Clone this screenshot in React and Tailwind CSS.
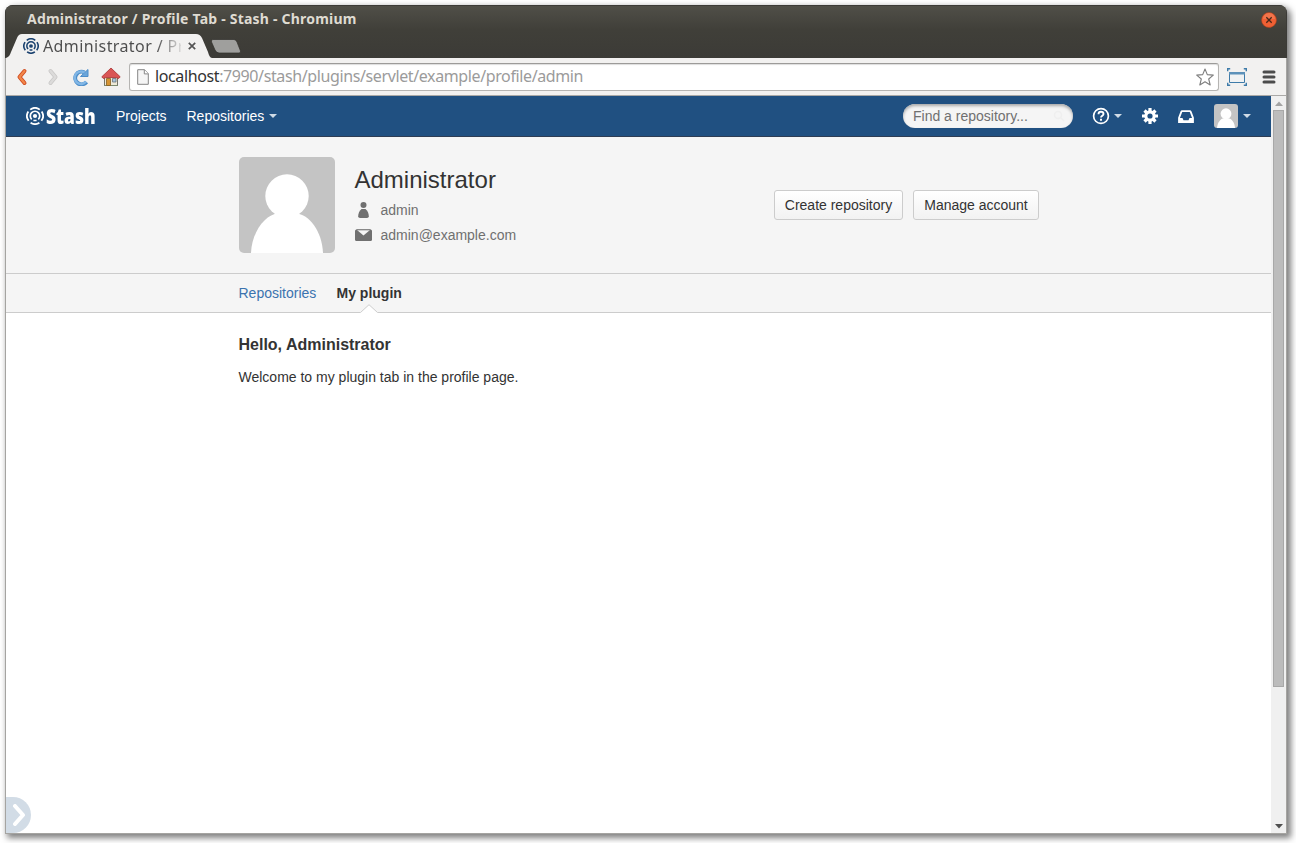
import React from "react";

function StashMark({ className }) {
  return (
    <svg className={className} viewBox="0 0 18 18" fill="none" stroke="currentColor">
      <circle cx="9" cy="9" r="2.1" fill="currentColor" stroke="none" />
      <path d="M5.700 12.300a4.700 4.700 0 1 1 6.600 0" strokeWidth="1.700" />
      <path d="M7.400 13.500h3.200" strokeWidth="1.600" />
      <path d="M2.300 4.600A8 8 0 0 0 2.600 13.800M4.200 2.600a8 8 0 0 1 9.600 0M15.700 4.600a8 8 0 0 1-.3 9.200M4.600 15.700a8 8 0 0 0 8.800 0" strokeWidth="1.800" />
    </svg>
  );
}

function Caret({ className }) {
  return (
    <svg className={className} width="8" height="4" viewBox="0 0 8 4">
      <path d="M0 0h8L4 4z" fill="currentColor" />
    </svg>
  );
}

function Avatar({ className }) {
  return (
    <svg className={className} viewBox="0 0 96 96">
      <rect width="96" height="96" fill="#c4c4c4" />
      <circle cx="48" cy="39" r="21.7" fill="#fff" />
      <path d="M12 96C13 74 27 57 39 56.500h18C70 57 83 74 84 96z" fill="#fff" />
    </svg>
  );
}

function TitleBar() {
  return (
    <div className="flex h-[24px] items-center justify-between bg-linear-to-b from-[#504f48] to-[#403f39] pr-[9px] pl-[21px]">
      <span className="mt-[2px] text-[14px] leading-5 font-bold tracking-[0.21px] whitespace-nowrap text-[#dfdbd2]">
        Administrator / Profile Tab - Stash - Chromium
      </span>
      <svg className="mt-[3px]" width="16" height="16" viewBox="0 0 16 16">
        <circle cx="8" cy="8" r="7.500" fill="#ef6034" stroke="#a8401f" strokeWidth=".6" />
        <path d="M2 7a6 6 0 0 1 12 0z" fill="#f4825b" opacity=".6" />
        <path d="M5.300 5.300l5.400 5.400M10.700 5.300l-5.400 5.400" stroke="#482719" strokeWidth="1.300" />
      </svg>
    </div>
  );
}

function TabStrip() {
  return (
    <div className="flex h-[28px] items-start bg-linear-to-b from-[#403f39] to-[#3c3b37]">
      <div className="relative h-[28px] w-[206px]">
        <svg className="absolute inset-0" width="206" height="28" viewBox="0 0 206 28">
          <path d="M0 28C3 27 4 25 5 22L11 8Q12.500 4 16 4H190Q194 4 196 8L202 22C203 26 204 27.500 206 28z" fill="#f2f1f0" />
        </svg>
        <div className="relative flex h-full items-center pt-[3px] pl-[17px]">
          <StashMark className="h-[16px] w-[16px] text-[#1b426f]" />
          <span className="ml-[4px] w-[138px] overflow-hidden bg-linear-to-r from-[#4c4c4c] from-[82%] to-transparent to-[103%] bg-clip-text text-[16px] leading-6 tracking-[0.400px] whitespace-nowrap text-transparent">
            Administrator / Pr
          </span>
          <svg className="ml-[7px]" width="8" height="8" viewBox="0 0 8 8">
            <path d="M.8.800l6.400 6.400M7.200.800L.8 7.200" stroke="#555" strokeWidth="1.700" />
          </svg>
        </div>
      </div>
      <svg className="mt-[9px] -ml-[2px]" width="32" height="15" viewBox="0 0 32 15">
        <path d="M3 .5H24Q26 .5 27 3L30.500 12Q31 14 29 14H9Q6.500 14 5 11L1.500 3Q.8.500 3 .5z" fill="#9f9f9d" stroke="#32312d" strokeWidth=".7" />
      </svg>
    </div>
  );
}

function Toolbar() {
  return (
    <div className="flex h-[38px] items-center border-b border-[#aaa9a7] bg-[#f2f1f0] pl-[10px]">
      <svg width="12" height="18" viewBox="0 0 12 18">
        <path d="M8.500 3L3.500 9l5 6" fill="none" stroke="#d04c20" strokeWidth="4" strokeLinecap="round" strokeLinejoin="round" />
        <path d="M8.500 3L3.500 9l5 6" fill="none" stroke="#f28649" strokeWidth="2.200" strokeLinecap="round" strokeLinejoin="round" />
      </svg>
      <svg className="ml-[19px]" width="12" height="18" viewBox="0 0 12 18">
        <path d="M3.500 3l5 6-5 6" fill="none" stroke="#c8c7c6" strokeWidth="4" strokeLinecap="round" strokeLinejoin="round" />
        <path d="M3.500 3l5 6-5 6" fill="none" stroke="#dcdbda" strokeWidth="2.500" strokeLinecap="round" strokeLinejoin="round" />
      </svg>
      <svg className="ml-[13px]" width="18" height="18" viewBox="0 0 18 18">
        <path d="M14.500 14A6.300 6.300 0 1 1 12.500 4.500" fill="none" stroke="#4c8dc9" strokeWidth="4" />
        <path d="M16 1.500v7H8.500z" fill="#6aa5da" stroke="#4c8dc9" strokeWidth="1" strokeLinejoin="round" />
        <path d="M14 13.600A6.300 6.300 0 1 1 12.500 4.500" fill="none" stroke="#81b6e5" strokeWidth="2.400" />
      </svg>
      <svg className="ml-[11px]" width="20" height="20" viewBox="0 0 20 20">
        <path d="M3.500 9L10 3l6.500 6v9.500h-13z" fill="#eee9d8" stroke="#78756b" />
        <path d="M3 18.500h14" stroke="#7d8a70" strokeWidth="1.200" />
        <path d="M5.500 11.500h4v7h-4z" fill="#d69434" stroke="#886021" strokeWidth=".8" />
        <path d="M11.500 11.500h3.500v3.500h-3.500z" fill="#a9c6df" stroke="#68717a" strokeWidth=".8" />
        <path d="M10 1L.8 9.800l1.500 1.700L5 10.500h10l2.700 1 1.500-1.700z" fill="#d95555" stroke="#a93232" strokeWidth=".8" />
      </svg>
      <div className="ml-[8px] flex h-[28px] w-[1090px] items-center rounded-[3px] border border-[#b5b4b2] border-t-[#9c9b99] bg-white pr-[4px] pl-[7px] shadow-[inset_0_1px_1px_#ddd]">
        <svg width="12" height="16" viewBox="0 0 12 16">
          <path d="M.7.700h6.800l3.800 4v10.600H.7z" fill="#f5f5f5" stroke="#858585" />
          <path d="M7.300.700v4.200h4" fill="#fff" stroke="#858585" />
        </svg>
        <span className="-mt-px ml-[6px] flex-1 text-[16px] leading-6 tracking-[-0.385px] whitespace-nowrap text-[#9b9b9b]">
          <span className="text-[#333]">localhost</span>:7990/stash/plugins/servlet/example/profile/admin
        </span>
        <svg width="18" height="18" viewBox="0 0 18 18">
          <path d="M9 1l2.300 5.600 6 .5-4.600 3.900 1.500 6L9 13.700 3.800 17l1.500-6L.7 7.100l6-.5z" fill="#fff" stroke="#7e7e7e" strokeWidth="1.100" strokeLinejoin="round" />
        </svg>
      </div>
      <svg className="ml-[8px]" width="20" height="18" viewBox="0 0 20 18">
        <path d="M2.500 4.500h15v10h-15z" fill="#f0f2f3" stroke="#3e7ba9" />
        <path d="M2 4h16v2.500H2z" fill="#5c91b9" />
        <path d="M.7 3.200V.7h2.500M16.800.7h2.500v2.500M.7 14.800v2.500h2.500M16.800 17.300h2.500v-2.500" fill="none" stroke="#3e7ba9" strokeWidth="1.400" />
      </svg>
      <svg className="ml-[15px]" width="15" height="14" viewBox="0 0 15 14">
        <path d="M2 2h10M2 7h10M2 12h10" stroke="#4c4c4c" strokeWidth="3" strokeLinecap="round" />
      </svg>
    </div>
  );
}

function AppHeader() {
  return (
    <header className="flex h-[41px] items-center border-b border-[#2e3d54] bg-[#205081] pl-[20px] text-[14px] text-white">
      <StashMark className="h-[18px] w-[18px]" />
      <div className="ml-[2px] h-6 w-[51px]">
        <span className="inline-block origin-left scale-x-[0.83] font-['Open_Sans',sans-serif] text-[21px] leading-6 font-extrabold">Stash</span>
      </div>
      <span className="ml-[19px] w-[51px]">Projects</span>
      <span className="ml-[19.500px] w-[78px]">Repositories</span>
      <Caret className="ml-[4.500px] text-[#d0dbe6]" />
      <div className="ml-[626px] flex h-6 w-[170px] items-center rounded-full bg-[#f5f5f5] pr-[8px] pl-[10px] text-[#707070] shadow-[inset_0_2px_3px_#aaa]">
        <span className="flex-1">Find a repository...</span>
        <svg width="12" height="12" viewBox="0 0 12 12" fill="none" stroke="#efefef" strokeWidth="1.500">
          <circle cx="5" cy="5" r="3.500" />
          <path d="M8 8l3 3" />
        </svg>
      </div>
      <svg className="ml-[19px]" width="18" height="18" viewBox="0 0 18 18" fill="none" stroke="#fff">
        <circle cx="9" cy="9" r="7.400" strokeWidth="1.700" />
        <path d="M6.500 7.200C6.500 5.700 7.600 4.800 9 4.800s2.500.8 2.500 2.200c0 1.700-2.500 1.800-2.500 3.600" strokeWidth="1.900" />
        <path d="M9 11.800v1.900" strokeWidth="2" />
      </svg>
      <Caret className="ml-[4px] text-[#d0dbe6]" />
      <svg className="ml-[20px]" width="16" height="16" viewBox="0 0 16 16">
        <g stroke="#fff" strokeWidth="3.200">
          <path d="M8 0v16M0 8h16M2.500 2.500l11 11M13.500 2.500l-11 11" />
        </g>
        <circle cx="8" cy="8" r="5.700" fill="#fff" />
        <circle cx="8" cy="8" r="2.600" fill="#205081" />
      </svg>
      <svg className="ml-[20px]" width="16" height="13" viewBox="0 0 16 13">
        <path d="M4.200 1.200h7.600q.7 0 .9.700L15 8v4H1V8l2.300-6.100q.2-.7.9-.7z" fill="none" stroke="#fff" strokeWidth="1.800" />
        <path d="M1 8h3.500l1 2.200h5l1-2.200H15v4.200H1z" fill="#fff" />
      </svg>
      <Avatar className="ml-[20px] h-6 w-6 rounded-[3px]" />
      <Caret className="ml-[5px] text-[#d0dbe6]" />
    </header>
  );
}

function ProfileHeader() {
  return (
    <section className="flex h-[137px] border-b border-[#ccc] bg-[#f5f5f5] pt-[20px] pl-[233px]">
      <Avatar className="h-24 w-24 rounded-[5px]" />
      <div className="ml-[19.500px] w-[419.500px] text-[14px] text-[#707070]">
        <h1 className="mt-[8px] text-[24px] leading-[30px] text-[#333]">Administrator</h1>
        <div className="mt-[5px] flex h-5 items-center">
          <svg width="17" height="16" viewBox="0 0 17 16" fill="#707070">
            <circle cx="8.500" cy="3" r="3" />
            <path d="M6.500 7h4q3.300 3 3.300 7.300Q13.800 16 12 16H5q-1.800 0-1.800-1.700Q3.200 10 6.500 7z" />
          </svg>
          <span className="ml-[9px]">admin</span>
        </div>
        <div className="mt-[5px] flex h-5 items-center">
          <svg className="-mt-px" width="17" height="12" viewBox="0 0 17 12">
            <rect y=".5" width="17" height="11.500" rx="1.500" fill="#707070" />
            <path d="M1.700.8L8.500 6.400 15.300.8z" fill="#f5f5f5" />
            <path d="M1.500.8h14" stroke="#707070" strokeWidth="1" />
          </svg>
          <span className="ml-[9px]">admin@example.com</span>
        </div>
      </div>
      <div className="mt-[33px] flex gap-[10px] text-[14px] text-[#333]">
        <button className="h-[30px] w-[129px] rounded-[3px] border border-[#ccc] bg-linear-to-b from-white to-[#f2f2f2] whitespace-nowrap">Create repository</button>
        <button className="h-[30px] w-[126px] rounded-[3px] border border-[#ccc] bg-linear-to-b from-white to-[#f2f2f2] whitespace-nowrap">Manage account</button>
      </div>
    </section>
  );
}

function ProfileTabs() {
  return (
    <nav className="flex h-[39px] items-center border-b border-[#ccc] bg-[#f5f5f5] pl-[232.500px] text-[14px]">
      <a className="w-[78px] text-[#3b73af]">Repositories</a>
      <a className="relative ml-[20px] flex h-[38px] items-center font-bold text-[#333]">
        My plugin
        <svg className="absolute top-[30px] left-[23.500px]" width="18" height="9" viewBox="0 0 18 9">
          <path d="M0 9L9 .5 18 9z" fill="#fff" />
          <path d="M.5 8.500L9 .7l8.500 7.800" fill="none" stroke="#ccc" />
        </svg>
      </a>
    </nav>
  );
}

function Scrollbar() {
  return (
    <div className="flex w-[15px] flex-col items-center bg-[#f0f0f0]">
      <svg className="mt-[5px] mb-[4px]" width="8" height="5" viewBox="0 0 8 5">
        <path d="M0 5h8L4 .5z" fill="#a3a3a3" />
      </svg>
      <div className="h-[577px] w-[11px] border border-[#a8a8a8] bg-[#bcbcbc]" />
      <svg className="mt-auto mb-[4px]" width="8" height="5" viewBox="0 0 8 5">
        <path d="M0 0h8L4 4.500z" fill="#505050" />
      </svg>
    </div>
  );
}

export default function App() {
  return (
    <div className="h-[843px] w-[1296px] overflow-hidden bg-white pt-[5px] pl-[5px] font-['Liberation_Sans',Arial,sans-serif]">
      <div className="flex h-[829px] w-[1282px] flex-col overflow-hidden rounded-t-[8px] bg-white shadow-[3px_3px_6px_1px_rgba(0,0,0,0.5)]">
        <div className="border-t border-[#3c3b37] bg-[#3c3b37] font-['Noto_Sans',sans-serif]">
          <div className="border-x border-[#3c3b37]">
            <TitleBar />
            <TabStrip />
          </div>
          <div className="border-x border-[#a5a4a1]">
            <Toolbar />
          </div>
        </div>
        <div className="flex flex-1 border-x border-b border-[#a5a4a1]">
          <main className="flex w-[1265px] flex-col">
            <AppHeader />
            <ProfileHeader />
            <ProfileTabs />
            <section className="pt-[22px] pl-[232.500px] text-[#333]">
              <h2 className="text-[16px] leading-5 font-bold">Hello, Administrator</h2>
              <p className="mt-[12px] text-[14px] leading-5">Welcome to my plugin tab in the profile page.</p>
            </section>
            <button className="mt-auto flex h-[36px] w-[25px] items-center rounded-r-full bg-[#d2dce6] pl-[6px]">
              <svg width="14" height="22" viewBox="0 0 14 22">
                <path d="M3 2l8 9-8 9" fill="none" stroke="#fff" strokeWidth="4" strokeLinecap="round" strokeLinejoin="round" />
              </svg>
            </button>
          </main>
          <Scrollbar />
        </div>
      </div>
    </div>
  );
}
